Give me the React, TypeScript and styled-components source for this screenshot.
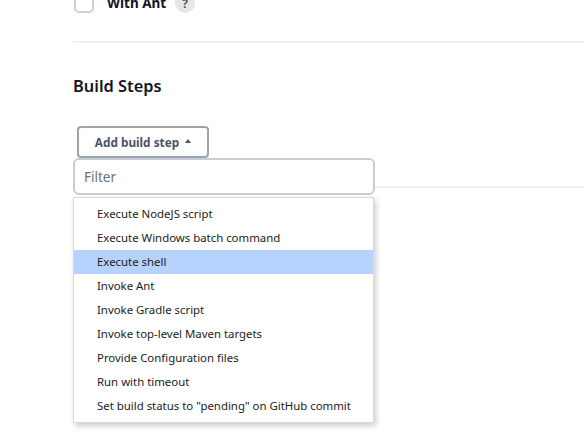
import React from "react";
import styled, { createGlobalStyle } from "styled-components";

const Global = createGlobalStyle`
  html, body { margin: 0; padding: 0; background: #fff; }
  body { font-family: "Noto Sans", "Open Sans", sans-serif; color: #14141f; }
`;

const Page = styled.div`
  position: relative;
  width: 584px;
  height: 434px;
  overflow: hidden;
  padding-left: 73px;
  box-sizing: border-box;
`;

const OptionRow = styled.div`
  display: flex;
  align-items: center;
  margin-top: -9px;
  height: 24px;
  padding-left: 1px;
`;

const Checkbox = styled.span`
  width: 20px;
  height: 20px;
  box-sizing: border-box;
  border: 2px solid #c9d2d8;
  border-radius: 5px;
  margin-right: 13px;
`;

const OptionLabel = styled.span`
  font-size: 13.5px;
  font-weight: 700;
  color: #14141f;
  margin-right: 9px;
`;

const Help = styled.span`
  width: 20px;
  height: 20px;
  border-radius: 50%;
  background: #e6e6e9;
  color: #55555f;
  font-size: 12px;
  font-weight: 700;
  display: flex;
  align-items: center;
  justify-content: center;
`;

const Divider = styled.div<{ $top: number }>`
  height: 2px;
  background: #f0f0f3;
  margin-top: ${(p) => p.$top}px;
`;

const Heading = styled.h2`
  margin: 30px 0 0 0;
  font-size: 16.4px;
  font-weight: 600;
  line-height: 26px;
  color: #14141f;
`;

const StepArea = styled.div`
  position: relative;
  margin-top: 27px;
  padding-left: 4px;
`;

const AddButton = styled.button`
  height: 32px;
  width: 132px;
  box-sizing: border-box;
  border: 2px solid #9aa4ae;
  border-radius: 4px;
  background: #fff;
  color: #4b5366;
  font-family: "Noto Sans", "Open Sans", sans-serif;
  font-size: 11.8px;
  font-weight: 700;
  display: flex;
  align-items: center;
  justify-content: center;
  gap: 6px;
  padding: 0;
`;

const Caret = styled.span`
  width: 0;
  height: 0;
  border-left: 3.5px solid transparent;
  border-right: 3.5px solid transparent;
  border-bottom: 4px solid #4b5366;
  margin-top: -2px;
`;

const Dropdown = styled.div`
  position: absolute;
  left: 0;
  top: 32px;
  width: 302px;
  z-index: 2;
`;

const FilterInput = styled.div`
  height: 37px;
  box-sizing: border-box;
  border: 2px solid #c6ced3;
  border-radius: 6px;
  background: #fff;
  display: flex;
  align-items: center;
  padding-left: 9px;
  font-size: 13.5px;
  color: #6f7177;
`;

const Menu = styled.ul`
  list-style: none;
  margin: 2px 0 0 0;
  padding: 4px 0;
  width: 301px;
  background: #fff;
  border: 1px solid #d9d9d9;
  box-sizing: border-box;
  box-shadow: 2px 3px 6px rgba(0, 0, 0, 0.2);
`;

const Item = styled.li<{ $active?: boolean }>`
  height: 24px;
  line-height: 24px;
  padding-left: 23px;
  font-size: 11.4px;
  color: #1b1b1b;
  background: ${(p) => (p.$active ? "#b5d3fd" : "transparent")};
  white-space: nowrap;
`;

const LowerDivider = styled.div`
  height: 2px;
  background: #f0f0f3;
  margin-top: 28px;
`;

const items = [
  "Execute NodeJS script",
  "Execute Windows batch command",
  "Execute shell",
  "Invoke Ant",
  "Invoke Gradle script",
  "Invoke top-level Maven targets",
  "Provide Configuration files",
  "Run with timeout",
  'Set build status to "pending" on GitHub commit',
];

export default function App() {
  return (
    <>
      <Global />
      <Page>
        <OptionRow>
          <Checkbox />
          <OptionLabel>With Ant</OptionLabel>
          <Help>?</Help>
        </OptionRow>
        <Divider $top={26} />
        <Heading>Build Steps</Heading>
        <StepArea>
          <AddButton>
            Add build step <Caret />
          </AddButton>
          <Dropdown>
            <FilterInput>Filter</FilterInput>
            <Menu>
              {items.map((t) => (
                <Item key={t} $active={t === "Execute shell"}>
                  {t}
                </Item>
              ))}
            </Menu>
          </Dropdown>
        </StepArea>
        <LowerDivider />
      </Page>
    </>
  );
}
